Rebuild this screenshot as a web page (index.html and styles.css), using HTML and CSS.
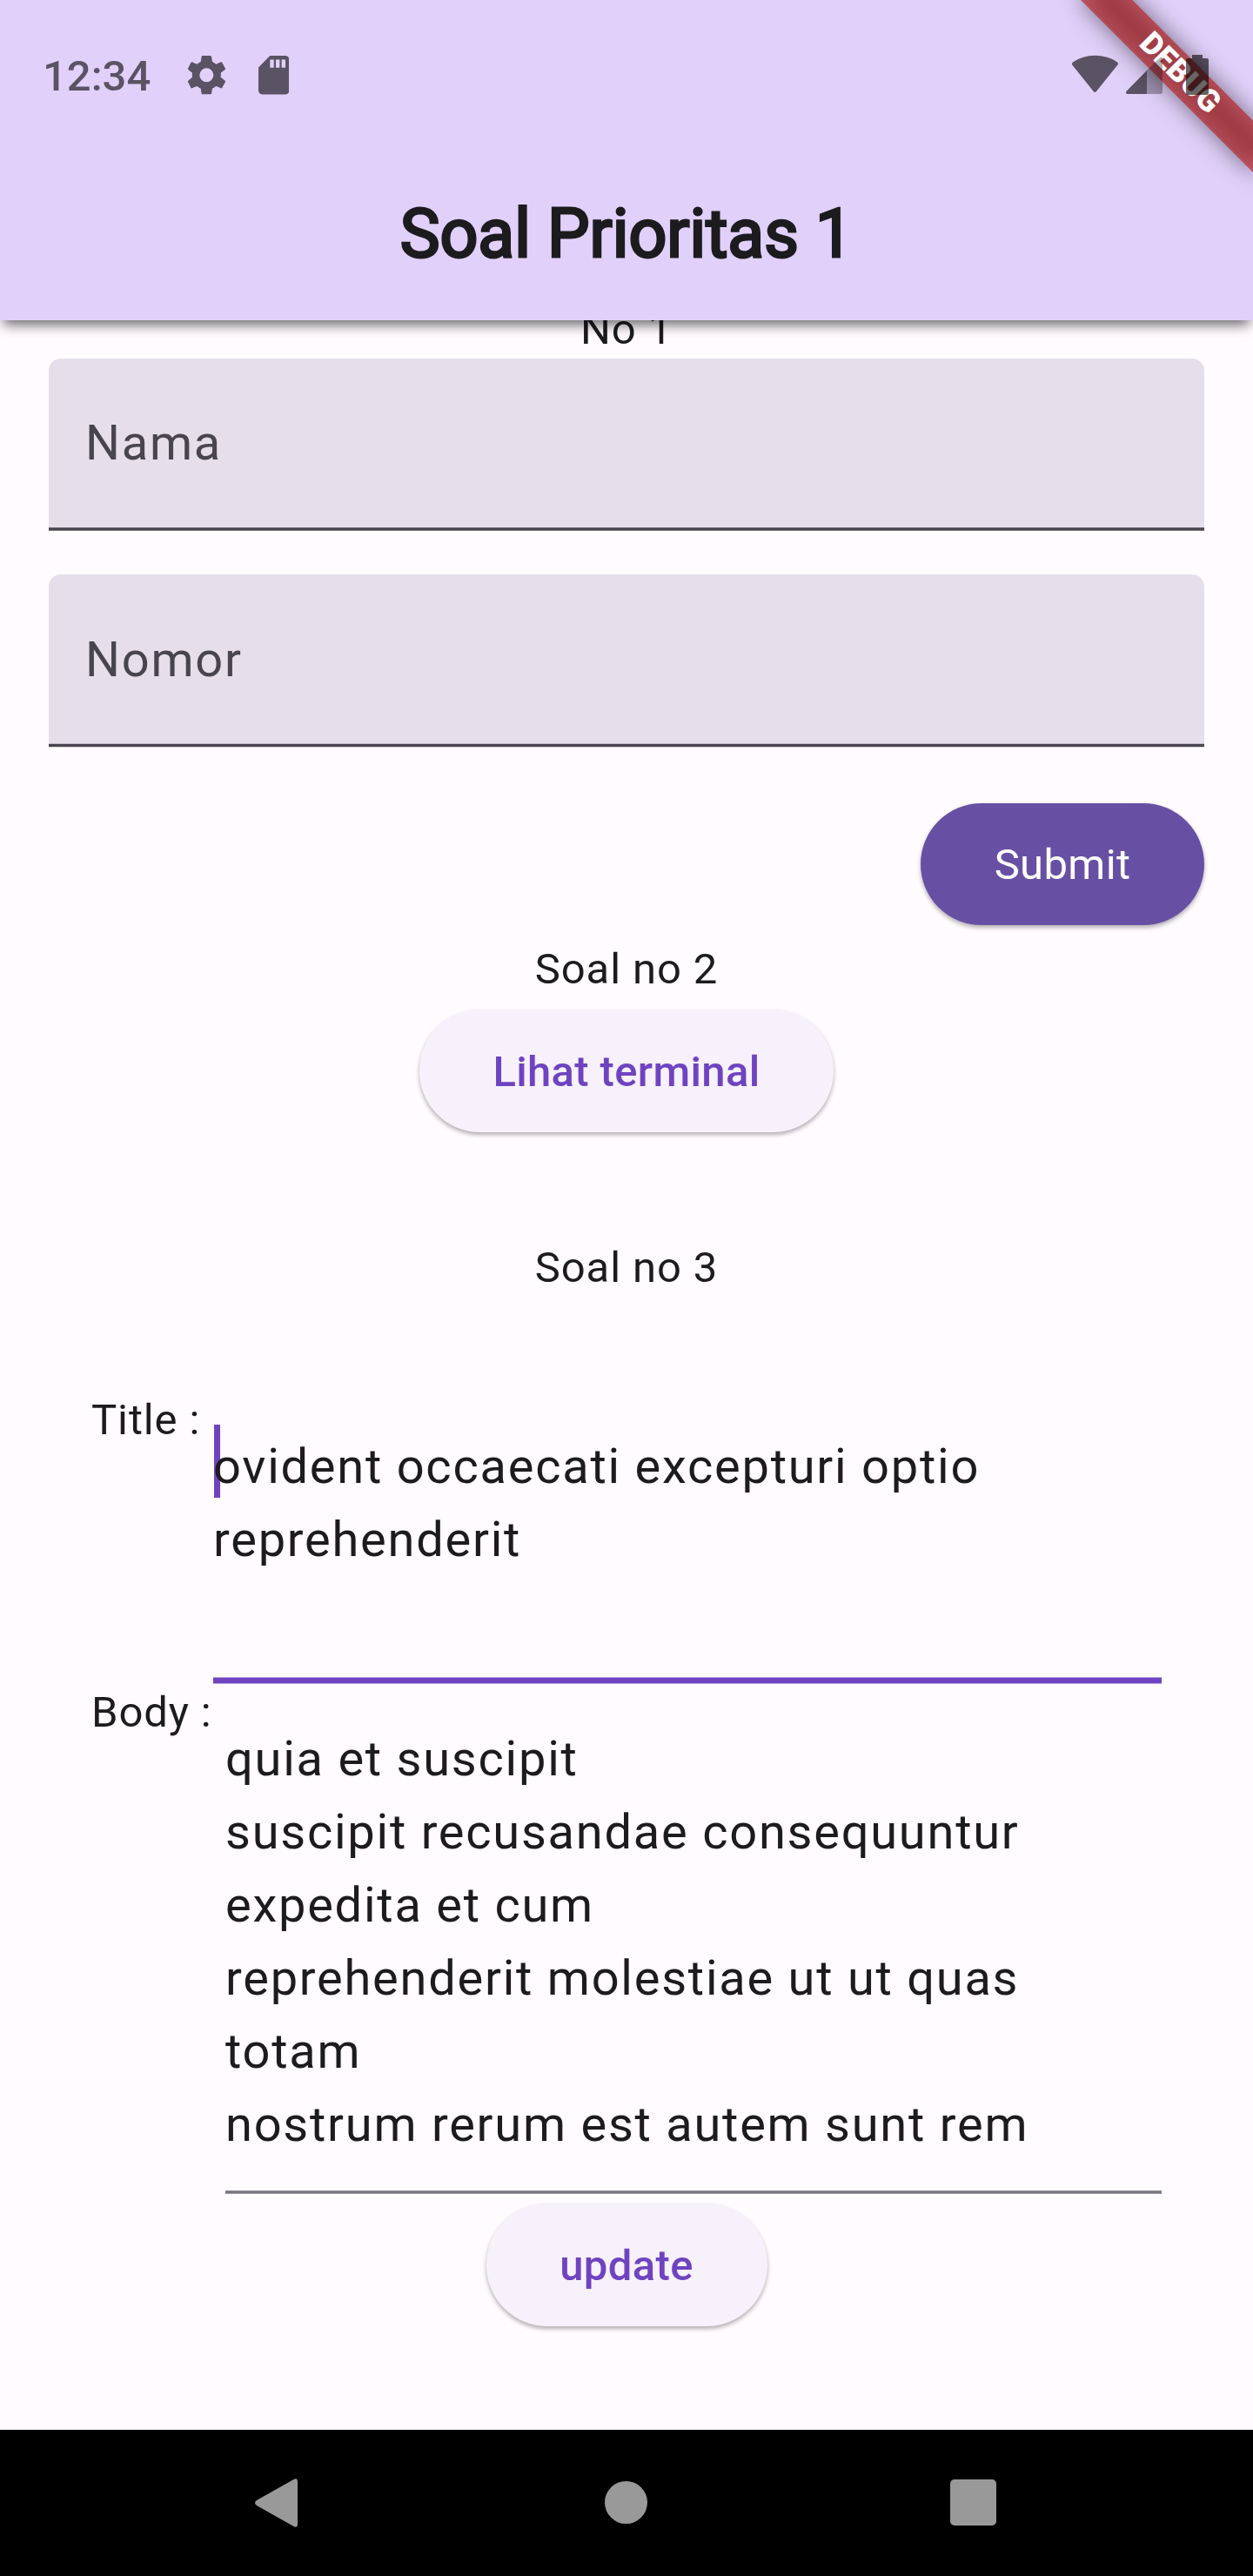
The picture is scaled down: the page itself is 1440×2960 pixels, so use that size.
FILE: index.html
```html
<!DOCTYPE html>
<html lang="id">
<head>
<meta charset="utf-8">
<title>Soal Prioritas 1</title>
<link rel="stylesheet" href="styles.css">
</head>
<body>
<div class="screen">
  <header class="app-bar">
    <div class="status-bar">
      <span class="clock">12:34</span>
      <svg class="gear" viewBox="645 189 135 138"><path fill-rule="evenodd" d="M698 192H726Q728 192 729 195L732 213Q739 216 745 221L762 214Q764 213 766 216L777 236Q778 238 776 240L761 251Q762 258 761 266L776 278Q778 280 777 282L766 302Q764 305 762 304L745 297Q739 302 732 305L729 323Q728 325 726 325H698Q696 325 695 323L692 305Q685 302 679 297L662 304Q660 305 658 302L648 282Q647 280 649 278L663 266Q662 258 663 251L649 240Q647 238 648 236L658 216Q660 213 662 214L679 221Q685 216 692 213L695 195Q696 192 698 192ZM712 235A24 24 0 1 0 712 283A24 24 0 1 0 712 235Z"/></svg>
      <svg class="sd" viewBox="4 2 16 20"><path d="M18 2h-8L4.02 8 4 20c0 1.100.900 2 2 2h12c1.100 0 2-.9 2-2V4c0-1.100-.9-2-2-2zm-6 6.200h-2V4h2v4.200zm3 0h-2V4h2v4.200zm3 0h-2V4h2v4.200z"/></svg>
      <svg class="signals" viewBox="270 180 480 150">
        <path d="M276 223Q274 218 280 214Q312 191 355 191Q398 191 431 214Q437 218 434 223L360 315Q355 321 350 315Z"/>
        <path d="M534 243V324H467Q460 323 463 315Z"/>
        <path class="faint" d="M534 243L579 199Q588 193 588 204V318Q588 324 582 324H534Z"/>
        <path d="M690 189H726V201H741Q747 201 747 207V321Q747 327 741 327H675Q669 327 669 321V207Q669 201 675 201H690Z"/>
      </svg>
    </div>
    <h1 class="title">Soal Prioritas 1</h1>
    <div class="debug"><span>DEBUG</span></div>
  </header>

  <main class="content">
    <p class="heading first">No 1</p>
    <div class="field name-field"><span>Nama</span></div>
    <div class="field number-field"><span>Nomor</span></div>
    <button class="button submit">Submit</button>
    <p class="heading">Soal no 2</p>
    <button class="button terminal">Lihat terminal</button>
    <p class="heading third">Soal no 3</p>
    <section class="post">
      <div class="row title-row">
        <label>Title :</label>
        <div class="input focused"><i class="caret"></i><span>ovident occaecati excepturi optio<br>reprehenderit</span></div>
      </div>
      <div class="row body-row">
        <label>Body :</label>
        <div class="input"><span>quia et suscipit<br>suscipit recusandae consequuntur<br>expedita et cum<br>reprehenderit molestiae ut ut quas<br>totam<br>nostrum rerum est autem sunt rem</span></div>
      </div>
    </section>
    <button class="button update">update</button>
  </main>

  <nav class="nav-bar">
    <svg class="back" viewBox="0 0 49 56"><path d="M45 .8Q49-1 49 4V52Q49 57 45 55.200L2 31Q-2 28 2 25Z"/></svg>
    <svg class="home" viewBox="0 0 49 49"><circle cx="24.500" cy="24.500" r="24.500"/></svg>
    <svg class="recent" viewBox="0 0 53 53"><rect width="53" height="53" rx="5"/></svg>
  </nav>
</div>
</body>
</html>
```
FILE: styles.css
```css
* { box-sizing: border-box; }
body { margin: 0; font-family: Roboto, sans-serif; color: #1c1b1e; }
p, h1 { margin: 0; }
.screen {
  position: relative;
  display: flex;
  flex-direction: column;
  width: 1440px;
  height: 2960px;
  overflow: hidden;
  background: #fffbff;
}

/* App bar */
.app-bar {
  position: relative;
  z-index: 1;
  flex: none;
  height: 368px;
  background: #e1d0fa;
  box-shadow: 0 9px 14px -4px rgba(0, 0, 0, .6);
}
.status-bar {
  position: relative;
  z-index: 2;
  display: flex;
  align-items: flex-start;
  height: 172px;
  padding: 59px 50px 0 49px;
}
.status-bar svg { fill: rgba(0, 0, 0, .6); }
.clock {
  width: 166px;
  font-size: 49px;
  font-weight: 500;
  line-height: 57px;
  color: rgba(0, 0, 0, .6);
}
.gear { width: 45px; height: 46px; margin-top: 4px; }
.sd { width: 35.5px; height: 44.5px; margin: 5px 0 0 36.5px; }
.signals { width: 160px; height: 50px; margin: 1px 0 0 auto; }
.status-bar .faint { fill: rgba(0, 0, 0, .3); }
.title {
  padding-top: 52px;
  font-size: 77px;
  font-weight: 400;
  line-height: 90px;
  text-align: center;
  -webkit-text-stroke: 3px #1c1b1e;
}

/* Corner banner, turned about the top right corner */
.debug {
  position: absolute;
  top: 98px;
  left: 1300px;
  width: 280px;
  height: 42px;
  transform: rotate(45deg);
  transform-origin: 140px -98px;
  text-align: center;
}
.debug::before {
  content: "";
  position: absolute;
  inset: 0;
  background: rgba(0, 0, 0, .5);
  filter: blur(14px);
}
.debug span {
  position: absolute;
  inset: 0;
  background: rgba(183, 28, 28, .63);
  color: #fff;
  font-size: 35.7px;
  font-weight: 900;
  line-height: 40px;
}

/* Content */
.content { display: flex; flex-direction: column; flex: 1; min-height: 0; }
.heading {
  height: 70px;
  font-size: 49px;
  line-height: 72px;
  letter-spacing: .875px;
  text-align: center;
}
.first { margin-top: -25px; }
.field {
  margin: 0 56px;
  padding: 55px 42px 0;
  border-radius: 14px 14px 0 0;
  font-size: 56px;
  line-height: 84px;
  letter-spacing: 1.75px;
  color: #49454f;
}
.name-field {
  height: 198px;
  margin-top: -1px;
  background: linear-gradient(0deg, #75717b 1px, #49454f 1px 3px, #6a6571 3px 4px, #e6dfeb 4px);
}
.number-field {
  height: 199px;
  margin-top: 50px;
  padding-top: 56px;
  background: linear-gradient(0deg, #d1cdd3 1px, #49454f 1px 4px, #bfb8c4 4px 5px, #e6dfeb 5px);
}
.button {
  flex: none;
  height: 140px;
  padding: 2px 0 0;
  border: 0;
  border-radius: 70px;
  font: 500 49px/138px Roboto, sans-serif;
  letter-spacing: .35px;
  color: #6f43c0;
  background: #f6f1fb;
  box-shadow: 0 3px 5px rgba(0, 0, 0, .3);
}
.submit {
  align-self: flex-end;
  width: 326px;
  margin: 64px 56px 15px 0;
  font-weight: 400;
  color: #fff;
  background: #6750a4;
}
.terminal { align-self: center; width: 476px; height: 141px; margin-top: 12px; }
.third { margin-top: 120px; }
.post { display: flex; flex-direction: column; margin-top: 105px; padding: 0 105px; }
.row { display: flex; }
.row label {
  flex: none;
  width: 140px;
  font-size: 49px;
  line-height: 72px;
  letter-spacing: .875px;
}
.body-row label { width: 154px; }
.input {
  position: relative;
  flex: 1;
  padding-top: 47px;
  font-size: 56px;
  line-height: 84px;
  letter-spacing: 1.75px;
  white-space: nowrap;
}
.input span { position: relative; }
.title-row { height: 336px; }
.title-row .input {
  height: 339px;
  flex: none;
  width: 1090px;
  background: linear-gradient(0deg, #b7a1df 1px, #6f43c0 1px 7px, #b7a1df 7px 8px, transparent 8px);
}
.body-row .input {
  height: 589px;
  background: linear-gradient(0deg, #98939c 1px, #7b757f 1px 3px, #8f8a93 3px 4px, transparent 4px);
}
.caret {
  position: absolute;
  top: 41px;
  left: 1px;
  width: 7px;
  height: 84px;
  background: #6f43c0;
}
.update { align-self: center; width: 323px; height: 141px; margin-top: 11px; }

/* Navigation bar */
.nav-bar {
  display: flex;
  flex: none;
  align-items: flex-start;
  height: 168px;
  padding-top: 56px;
  background: #000;
}
.nav-bar svg { fill: #999; }
.back { width: 49px; height: 56px; margin-left: 293px; }
.home { width: 49px; height: 49px; margin: 3px 0 0 353px; }
.recent { width: 53px; height: 53px; margin: 1px 0 0 348px; }
```
